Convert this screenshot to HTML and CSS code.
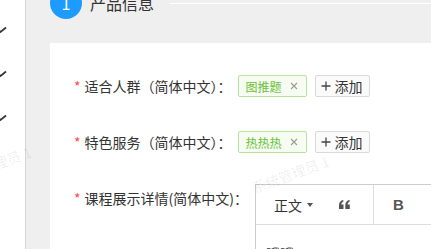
FILE: index.html
```html
<!DOCTYPE html>
<html lang="zh-CN">
<head>
<meta charset="utf-8">
<link rel="stylesheet" href="styles.css">
</head>
<body>
<div class="layout">
  <aside class="sidebar">
    <span class="check"><svg width="10" height="7" viewBox="0 0 10 7"><polyline points="1,3.5 3.5,6 9,1.5" fill="none" stroke="#333" stroke-width="1.7"/></svg></span>
    <span class="check"><svg width="10" height="7" viewBox="0 0 10 7"><polyline points="1,3.5 3.5,6 9,1.5" fill="none" stroke="#333" stroke-width="1.7"/></svg></span>
    <span class="check"><svg width="10" height="7" viewBox="0 0 10 7"><polyline points="1,3.5 3.5,6 9,1.5" fill="none" stroke="#333" stroke-width="1.7"/></svg></span>
  </aside>
  <main class="main">
    <div class="step">
      <span class="step-num">1</span>
      <span class="step-title">产品信息</span>
      <span class="step-line"></span>
    </div>
    <section class="card">
      <div class="form-row">
        <label class="form-label"><span class="req">*</span>适合人群（简体中文）：</label>
        <div class="form-field">
          <span class="tag">图推题<svg class="tag-close" width="8" height="8" viewBox="0 0 8 8"><path d="M1 1L7 7M7 1L1 7" stroke="#9a9a9a" stroke-width="1.1"/></svg></span>
          <button class="add-btn"><svg width="10" height="10" viewBox="0 0 10 10"><path d="M5 0.5V9.5M0.5 5H9.5" stroke="#444" stroke-width="1.3"/></svg>添加</button>
        </div>
      </div>
      <div class="form-row">
        <label class="form-label"><span class="req">*</span>特色服务（简体中文）：</label>
        <div class="form-field">
          <span class="tag">热热热<svg class="tag-close" width="8" height="8" viewBox="0 0 8 8"><path d="M1 1L7 7M7 1L1 7" stroke="#9a9a9a" stroke-width="1.1"/></svg></span>
          <button class="add-btn"><svg width="10" height="10" viewBox="0 0 10 10"><path d="M5 0.5V9.5M0.5 5H9.5" stroke="#444" stroke-width="1.3"/></svg>添加</button>
        </div>
      </div>
      <div class="form-row row-top">
        <label class="form-label"><span class="req">*</span>课程展示详情(简体中文)：</label>
        <div class="editor">
          <div class="toolbar">
            <span class="tb-item tb-heading">正文<span class="caret"></span></span>
            <span class="tb-item tb-quote"><svg width="11" height="9" viewBox="0 0 11 9"><path d="M0 9V5.2C0 2.2 1.6 0.5 4.3 0V1.8C3 2.2 2.4 3 2.4 4.4H4.5V9Z M6.3 9V5.2C6.3 2.2 7.9 0.5 10.6 0V1.8C9.3 2.2 8.7 3 8.7 4.4H10.8V9Z" fill="#555"/></svg></span>
            <span class="tb-sep"></span>
            <span class="tb-item tb-bold">B</span>
          </div>
          <div class="editor-body">哦哦</div>
        </div>
      </div>
    </section>
  </main>
</div>
<div class="watermark wm1">系统管理员 1</div>
<div class="watermark wm2">系统管理员 1</div>
</body>
</html>
```
FILE: styles.css
```css
* { box-sizing: border-box; }
html, body { margin: 0; padding: 0; }
body {
  width: 431px;
  height: 249px;
  overflow: hidden;
  position: relative;
  font-family: "Noto Sans CJK SC", "Noto Sans", sans-serif;
  color: #333;
  background: #fff;
}
.layout {
  display: flex;
  height: 249px;
}
.sidebar {
  width: 26px;
  flex: none;
  background: #fff;
  border-right: 1px solid #d4d4d4;
  display: flex;
  flex-direction: column;
  padding-top: 26px;
  gap: 37px;
}
.check {
  display: block;
  height: 7px;
  margin-left: -3px;
  line-height: 0;
}
.main {
  flex: 1;
  min-width: 0;
  background: #efefef;
  padding-left: 24px;
  overflow: hidden;
}
.step {
  display: flex;
  align-items: center;
  height: 32px;
  margin-top: -13px;
}
.step-num {
  width: 32px;
  height: 32px;
  border-radius: 50%;
  background: #1e9bff;
  color: #fff;
  font-size: 16px;
  line-height: 32px;
  text-align: center;
  flex: none;
}
.step-title {
  margin-left: 8px;
  font-size: 16px;
  color: #333;
  flex: none;
}
.step-line {
  flex: 1;
  height: 1px;
  background: #fff;
  margin-left: 16px;
}
.card {
  margin-top: 24px;
  background: #fff;
  height: 300px;
  padding: 29px 0 0 24px;
  display: flex;
  flex-direction: column;
  gap: 28px;
}
.form-row {
  display: flex;
  align-items: center;
  height: 28px;
  white-space: nowrap;
}
.row-top { align-items: flex-start; }
.form-label {
  font-size: 14px;
  line-height: 28px;
  color: #333;
  flex: none;
}
.req {
  color: #f5484a;
  margin-right: 4px;
}
.form-field {
  display: flex;
  align-items: center;
  gap: 8px;
  margin-left: 6px;
}
.tag {
  display: inline-flex;
  align-items: center;
  height: 22px;
  width: 69px;
  padding: 0 0 0 7px;
  border: 1px solid #b6e39c;
  background: #f6fcf1;
  color: #6cc23c;
  font-size: 12px;
  border-radius: 2px;
}
.tag-close {
  margin-left: 8px;
  flex: none;
}
.add-btn {
  display: inline-flex;
  align-items: center;
  gap: 4px;
  height: 22px;
  width: 55px;
  padding: 0 0 0 5px;
  border: 1px solid #d9d9d9;
  background: #fafafa;
  border-radius: 2px;
  font-family: inherit;
  font-size: 14px;
  color: #333;
}
.editor {
  margin-left: 7px;
  width: 320px;
  flex: none;
  border: 1px solid #ccc;
  border-right: none;
  height: 120px;
}
.toolbar {
  display: flex;
  align-items: center;
  height: 40px;
  border-bottom: 1px solid #ddd;
}
.tb-item {
  display: inline-flex;
  align-items: center;
  color: #555;
}
.tb-heading {
  margin-left: 18px;
  font-size: 14px;
  color: #333;
}
.caret {
  width: 0;
  height: 0;
  border-left: 3px solid transparent;
  border-right: 3px solid transparent;
  border-top: 4px solid #555;
  margin-left: 5px;
}
.tb-quote {
  margin-left: 26px;
}
.tb-sep {
  align-self: stretch;
  width: 1px;
  background: #ddd;
  margin-left: 23px;
}
.tb-bold {
  margin-left: 19px;
  font-family: "Liberation Sans", Arial, sans-serif;
  font-weight: bold;
  font-size: 15px;
}
.editor-body {
  padding: 18px 10px;
  font-size: 14px;
  color: #333;
}
.watermark {
  position: absolute;
  font-size: 14px;
  line-height: 20px;
  color: rgba(0, 0, 0, 0.08);
  transform: rotate(-20deg);
  white-space: nowrap;
  pointer-events: none;
}
.wm1 { left: -48px; top: 155px; }
.wm2 { left: 250px; top: 164px; }
```
